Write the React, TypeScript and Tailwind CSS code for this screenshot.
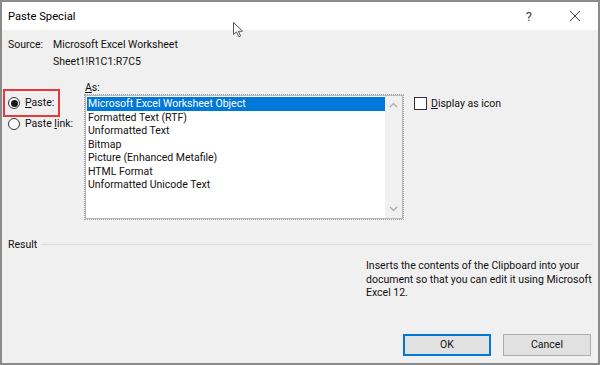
import React from "react";

const font = { fontFamily: "Roboto, 'Noto Sans', sans-serif" };

function Radio({ checked }: { checked?: boolean }) {
  return (
    <span className="flex h-[12px] w-[12px] shrink-0 items-center justify-center rounded-full border border-[#333] bg-white">
      {checked && <span className="h-[7px] w-[7px] rounded-full bg-[#1a1a1a]" />}
    </span>
  );
}

function Chevron({ down }: { down?: boolean }) {
  return (
    <svg width="9" height="6" viewBox="0 0 9 6" className="block">
      <path d={down ? "M1 1 L4.5 4.5 L8 1" : "M1 5 L4.5 1.5 L8 5"} fill="none" stroke="#a6a6a6" strokeWidth="1.2" />
    </svg>
  );
}

export default function App() {
  const items = [
    "Microsoft Excel Worksheet Object",
    "Formatted Text (RTF)",
    "Unformatted Text",
    "Bitmap",
    "Picture (Enhanced Metafile)",
    "HTML Format",
    "Unformatted Unicode Text",
  ];
  return (
    <div style={font} className="relative flex h-[365px] w-[600px] flex-col border-2 border-[#8a8a8a] text-[10.5px] text-[#111]">
      {/* Title bar */}
      <div className="flex h-[28px] shrink-0 items-center bg-white">
        <span className="pl-[6px] text-[11.2px] leading-[15px] text-black">Paste Special</span>
        <span className="ml-auto mr-[37px] text-[13px] leading-[15px] text-[#444]">?</span>
        <svg width="12" height="12" viewBox="0 0 12 12" className="mr-[17px]">
          <path d="M1 1 L11 11 M11 1 L1 11" stroke="#444" strokeWidth="1" />
        </svg>
      </div>

      {/* Body */}
      <div className="flex flex-1 flex-col bg-[#f0f0f0]">
        {/* Source */}
        <div className="flex pl-[6px] pt-[6px] leading-[17px]">
          <span className="w-[45px]">Source:</span>
          <div className="flex flex-col">
            <span>Microsoft Excel Worksheet</span>
            <span>Sheet1!R1C1:R7C5</span>
          </div>
        </div>

        {/* Main row */}
        <div className="mt-[10px] flex">
          {/* Radios */}
          <div className="flex w-[83px] flex-col pl-[1px] pt-[9px]">
            <div className="flex h-[28px] w-[57px] items-center border-2 border-[#e8383d] pl-[3px]">
              <Radio checked />
              <span className="ml-[5px] leading-[14px]">
                <span className="underline">P</span>aste:
              </span>
            </div>
            <div className="flex h-[14px] items-center pl-[5px]">
              <Radio />
              <span className="ml-[5px] leading-[14px]">
                Paste <span className="underline">l</span>ink:
              </span>
            </div>
          </div>

          {/* List */}
          <div className="flex flex-col">
            <span className="leading-[15px]">
              <span className="underline">A</span>s:
            </span>
            <div className="flex h-[124px] w-[318px] border border-[#b9b9b9] bg-white outline-1 outline-dotted outline-[#a0a0a0]">
              <div className="flex flex-1 flex-col pl-[1px] pt-[1px]">
                {items.map((it, i) => (
                  <div
                    key={it}
                    className={
                      i === 0
                        ? "h-[13.5px] bg-[#0078d7] pl-[1px] leading-[13.5px] text-white"
                        : "h-[13.5px] pl-[1px] leading-[13.5px]"
                    }
                  >
                    {it}
                  </div>
                ))}
              </div>
              <div className="flex w-[17px] flex-col items-center justify-between bg-[#f0f0f0] py-[6px]">
                <Chevron />
                <Chevron down />
              </div>
            </div>
          </div>

          {/* Checkbox */}
          <div className="ml-[11px] mt-[17px] flex h-[13px] items-center">
            <span className="h-[13px] w-[13px] border border-[#333] bg-white" />
            <span className="ml-[4px] leading-[14px]">
              <span className="underline">D</span>isplay as icon
            </span>
          </div>
        </div>

        {/* Result */}
        <div className="mt-[18px] flex items-center pl-[6px] pr-[6px]">
          <span className="leading-[15px]">Result</span>
          <span className="ml-[4px] h-px flex-1 bg-[#dadada]" />
        </div>
        <div className="ml-[364px] mt-[7px] whitespace-nowrap leading-[13.5px]">
          Inserts the contents of the Clipboard into your
          <br />
          document so that you can edit it using Microsoft
          <br />
          Excel 12.
        </div>

        {/* Buttons */}
        <div className="mt-auto flex justify-end gap-[12px] pb-[7px] pr-[7px]">
          <button className="flex h-[22px] w-[88px] items-center justify-center border-2 border-[#0078d7] bg-[#e1e1e1]">
            OK
          </button>
          <button className="flex h-[22px] w-[88px] items-center justify-center border border-[#adadad] bg-[#e1e1e1]">
            Cancel
          </button>
        </div>
      </div>

      {/* Mouse cursor overlay */}
      <svg width="12" height="16" viewBox="0 0 12 16" className="absolute left-[231px] top-[20px]">
        <path d="M0.5 0.5 L0.5 12.5 L3.5 9.8 L5.8 14.8 L7.6 14 L5.4 9.2 L9.5 9.2 Z" fill="white" stroke="#555" strokeWidth="1" />
      </svg>
    </div>
  );
}
